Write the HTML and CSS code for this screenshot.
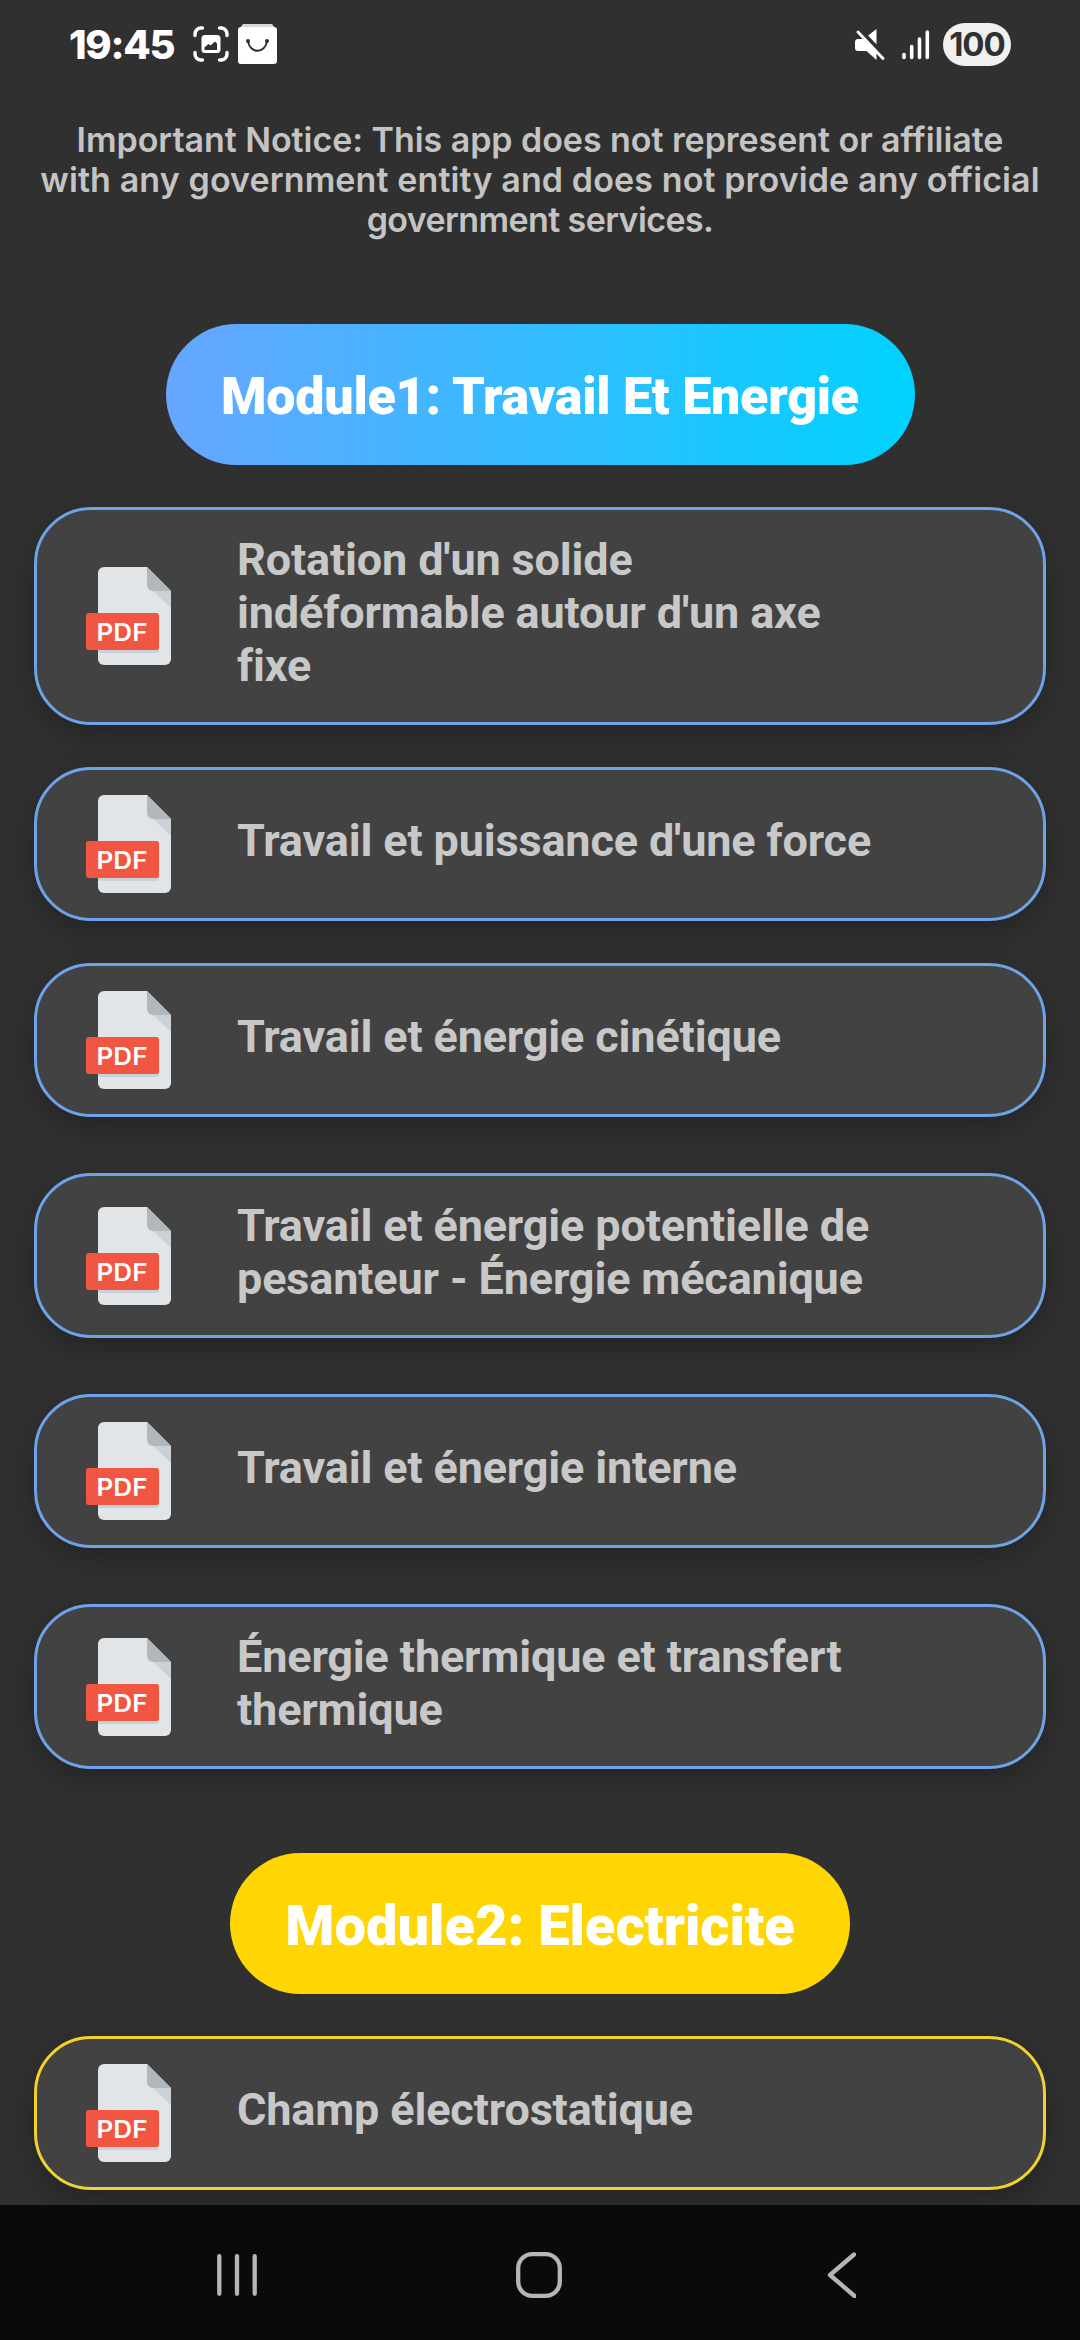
FILE: index.html
```html
<!DOCTYPE html>
<html lang="fr">
<head>
  <meta charset="UTF-8" />
  <meta name="viewport" content="width=device-width, initial-scale=1.0" />
  <title>Modules</title>
  <link rel="stylesheet" href="styles.css">
</head>
<body>

  <!-- shared PDF icon -->
  <svg class="defs" width="0" height="0">
    <symbol id="pdf" viewBox="0 0 85 98">
      <path fill="#e2e5e7" d="M18 0h43l24 24v68a6 6 0 0 1-6 6H18a6 6 0 0 1-6-6V6a6 6 0 0 1 6-6z"/>
      <path fill="#cad1d8" d="M67 24h18v17z"/>
      <path fill="#b0b7bd" d="M61 0l24 24H67a6 6 0 0 1-6-6z"/>
      <path fill="#cad1d8" d="M12 83h58a3 3 0 0 0 3-3v3a3 3 0 0 1-3 3H12z"/>
      <rect fill="#f15642" y="46" width="73" height="37" rx="2.5"/>
      <text class="pdf-label" x="10.500" y="73.500" textLength="51" lengthAdjust="spacingAndGlyphs">PDF</text>
    </symbol>
  </svg>

  <header class="status-bar">
    <span class="time">19:45</span>
    <svg class="capture" width="36" height="36" viewBox="0 0 36 36">
      <path fill="none" stroke="#fff" stroke-width="3.4" stroke-linecap="round" d="M2 9.500V8a6 6 0 0 1 6-6h1.500M26.500 2H28a6 6 0 0 1 6 6v1.500M34 26.500V28a6 6 0 0 1-6 6h-1.500M9.500 34H8a6 6 0 0 1-6-6v-1.500"/>
      <rect fill="#fff" x="8.500" y="9" width="19" height="18" rx="3.500"/>
      <path fill="#303030" d="M11.500 24v-2.500l4-3.500 2 1.500 4.500-4 2 2V24z"/>
    </svg>
    <svg width="39" height="40" viewBox="0 0 39 40">
      <path fill="#d8d8d8" d="M5 0h29l3 4v4H2V4z"/>
      <rect fill="#fff" y="3" width="39" height="37" rx="3"/>
      <circle fill="#303030" cx="10" cy="17" r="2"/>
      <circle fill="#303030" cx="29" cy="17" r="2"/>
      <path fill="none" stroke="#303030" stroke-width="2" d="M10 17c1.500 13 17.500 13 19 0"/>
    </svg>

    <div class="status-right">
      <svg width="30" height="31" viewBox="0 0 30 31">
        <path fill="#fff" d="M3 10h5l13.500 13.500V31L11.500 22H3a3 3 0 0 1-3-3v-6a3 3 0 0 1 3-3zM12.500 7L21.500 0v15.500z"/>
        <path stroke="#303030" stroke-width="3" d="M5 0l25 27"/>
        <path stroke="#fff" stroke-width="2.800" stroke-linecap="round" d="M3 3l25 26.500"/>
      </svg>
      <svg width="28" height="31" viewBox="0 0 28 31">
        <path stroke="#fff" stroke-width="3.600" stroke-linecap="round" d="M2 25.500v3M9.700 17.500v11M17.500 10v18.500M25.300 3v25.500"/>
      </svg>
      <span class="battery">100</span>
    </div>
  </header>

  <main class="content">
    <p class="notice">
      <span class="l1">Important Notice: This app does not represent or affiliate</span>
      <span class="l2">with any government entity and does not provide any official</span>
      <span class="l3">government services.</span>
    </p>

    <section class="module blue">
      <h2>Module1: Travail Et Energie</h2>
      <a class="card"><svg class="icon"><use href="#pdf"/></svg><span>Rotation d'un solide indéformable autour d'un axe fixe</span></a>
      <a class="card"><svg class="icon"><use href="#pdf"/></svg><span>Travail et puissance d'une force</span></a>
      <a class="card"><svg class="icon"><use href="#pdf"/></svg><span>Travail et énergie cinétique</span></a>
      <a class="card spaced"><svg class="icon"><use href="#pdf"/></svg><span>Travail et énergie potentielle de pesanteur - Énergie mécanique</span></a>
      <a class="card spaced"><svg class="icon"><use href="#pdf"/></svg><span>Travail et énergie interne</span></a>
      <a class="card spaced"><svg class="icon"><use href="#pdf"/></svg><span>Énergie thermique et transfert thermique</span></a>
    </section>

    <section class="module yellow">
      <h2>Module2: Electricite</h2>
      <a class="card"><svg class="icon"><use href="#pdf"/></svg><span>Champ électrostatique</span></a>
    </section>
  </main>

  <nav class="nav-bar">
    <svg width="40" height="46" viewBox="0 0 40 46">
      <path d="M2.300 4.200v37.600M20 4.200v37.600M37.700 4.200v37.600"/>
    </svg>
    <svg width="46" height="46" viewBox="0 0 46 46">
      <rect x="2.200" y="2.200" width="41.600" height="41.600" rx="14"/>
    </svg>
    <svg width="35" height="46" viewBox="0 0 35 46">
      <path d="M33 2.500L9 23l24.500 21"/>
    </svg>
  </nav>

</body>
</html>
```
FILE: styles.css
```css
* {
  box-sizing: border-box;
}
body {
  margin: 0;
  width: 1080px;
  height: 2340px;
  display: flex;
  flex-direction: column;
  overflow: hidden;
  background: #303030;
  font-family: Roboto, sans-serif;
}
svg {
  display: block;
  flex: none;
}
.defs {
  display: none;
}

.status-bar {
  height: 88px;
  flex: none;
  display: flex;
  align-items: center;
  padding: 0 69px;
  color: #fff;
  font-family: Inter, sans-serif;
}
.time {
  width: 124px;
  font-size: 40px;
  font-weight: 800;
  letter-spacing: -1.3px;
}
.capture {
  margin-right: 9px;
}
.status-right {
  margin-left: auto;
  display: flex;
  align-items: center;
}
.status-right svg {
  margin-right: 17px;
}
.status-right svg + svg {
  margin-right: 13px;
}
.battery {
  width: 68px;
  height: 43px;
  border-radius: 22px;
  background: #f0f0f0;
  color: #303030;
  font-size: 33px;
  font-weight: 700;
  line-height: 43px;
  letter-spacing: -1px;
  text-align: center;
}

.content {
  flex: 1;
  min-height: 0;
  overflow: hidden;
}
.notice {
  margin: 0;
  padding-top: 32px;
  font-family: Inter, sans-serif;
  font-size: 34px;
  font-weight: 600;
  line-height: 40px;
  text-align: center;
  color: #c4c4c4;
}
.notice span {
  display: block;
  white-space: nowrap;
}
.l1 { letter-spacing: -0.05px; }
.l2 { letter-spacing: 0.12px; }
.l3 { letter-spacing: -0.6px; }

.module {
  display: flex;
  flex-direction: column;
  padding: 84px 34px 0;
}
.module h2 {
  align-self: center;
  margin: 0;
  width: 749px;
  height: 141px;
  padding-top: 2px;
  border-radius: 71px;
  line-height: 141px;
  text-align: center;
  font-size: 52px;
  font-weight: 900;
  letter-spacing: -0.25px;
  color: #fff;
}
.blue h2 {
  background: linear-gradient(90deg, #67a6ff, #00d2ff);
}
.yellow h2 {
  width: 620px;
  padding-top: 3px;
  font-size: 56px;
  letter-spacing: 0;
  background: #ffd604;
}

.card {
  display: flex;
  align-items: center;
  gap: 66px;
  min-height: 154px;
  margin-top: 42px;
  padding: 0 160px 0 49px;
  border: 3px solid;
  border-radius: 57px;
  background: #424242;
  box-shadow: 0 10px 28px rgba(0, 0, 0, 0.25);
}
.card span {
  padding: 23px 0 30px;
  font-size: 45px;
  font-weight: 700;
  line-height: 53px;
  letter-spacing: -0.15px;
  color: #c8c8c8;
}
.spaced {
  margin-top: 56px;
}
.blue .card {
  border-color: #6fa3e8;
}
.yellow .card {
  border-color: #f2d22e;
}
.icon {
  width: 85px;
  height: 98px;
}
.pdf-label {
  font-family: Inter, sans-serif;
  font-size: 24px;
  font-weight: 600;
  fill: #fff;
}

.nav-bar {
  height: 135px;
  flex: none;
  display: flex;
  align-items: center;
  justify-content: space-between;
  padding: 5px 224px 0 217px;
  background: #0a0a0a;
}
.nav-bar svg {
  fill: none;
  stroke: #b6b6b6;
  stroke-width: 4.3;
  stroke-linecap: round;
  stroke-linejoin: round;
}
```
